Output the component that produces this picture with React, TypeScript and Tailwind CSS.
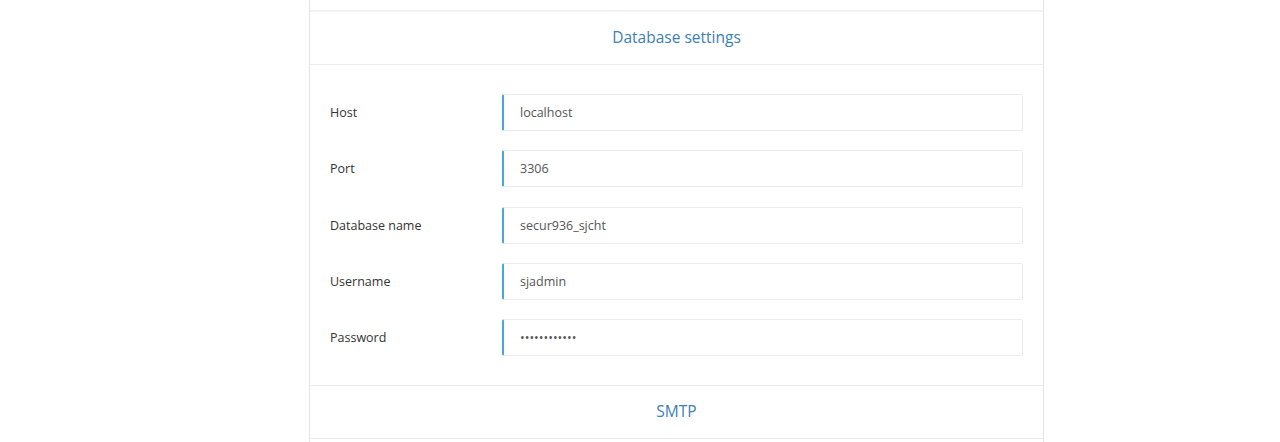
import React from "react";

const rows = [
  { label: "Host", value: "localhost" },
  { label: "Port", value: "3306" },
  { label: "Database name", value: "secur936_sjcht" },
  { label: "Username", value: "sjadmin" },
  { label: "Password", value: "••••••••••••" },
];

export default function App() {
  return (
    <div className="w-[1280px] h-[442px] overflow-hidden bg-white" style={{ fontFamily: '"Open Sans", sans-serif' }}>
      <div className="ml-[309px] w-[735px] border-x border-[#e3e3e3] bg-white">
        <div className="h-[12px] border-b-2 border-[#f2f2f2]" />
        <div className="h-[53px] flex items-center justify-center border-b border-[#ececec] text-[15.5px] text-[#3d80b3]">
          Database settings
        </div>
        <div className="pt-[29px] pb-[29px] px-[20px] flex flex-col gap-[19.25px] border-b border-[#ececec]">
          {rows.map((r) => (
            <div key={r.label} className="flex items-center h-[37px]">
              <div className="w-[172px] pt-[2px] text-[12.5px] text-[#333]">{r.label}</div>
              <div className="flex-1 h-[37px] flex items-center border border-[#ebebeb] border-l-2 border-l-[#49a9d6] rounded-[2px] pl-[16px] pt-[2px] text-[12.5px] text-[#555]">
                {r.value}
              </div>
            </div>
          ))}
        </div>
        <div className="h-[53px] flex items-center justify-center border-b border-[#ececec] text-[15.5px] text-[#3d80b3]">
          SMTP
        </div>
        <div className="h-[20px]" />
      </div>
    </div>
  );
}
